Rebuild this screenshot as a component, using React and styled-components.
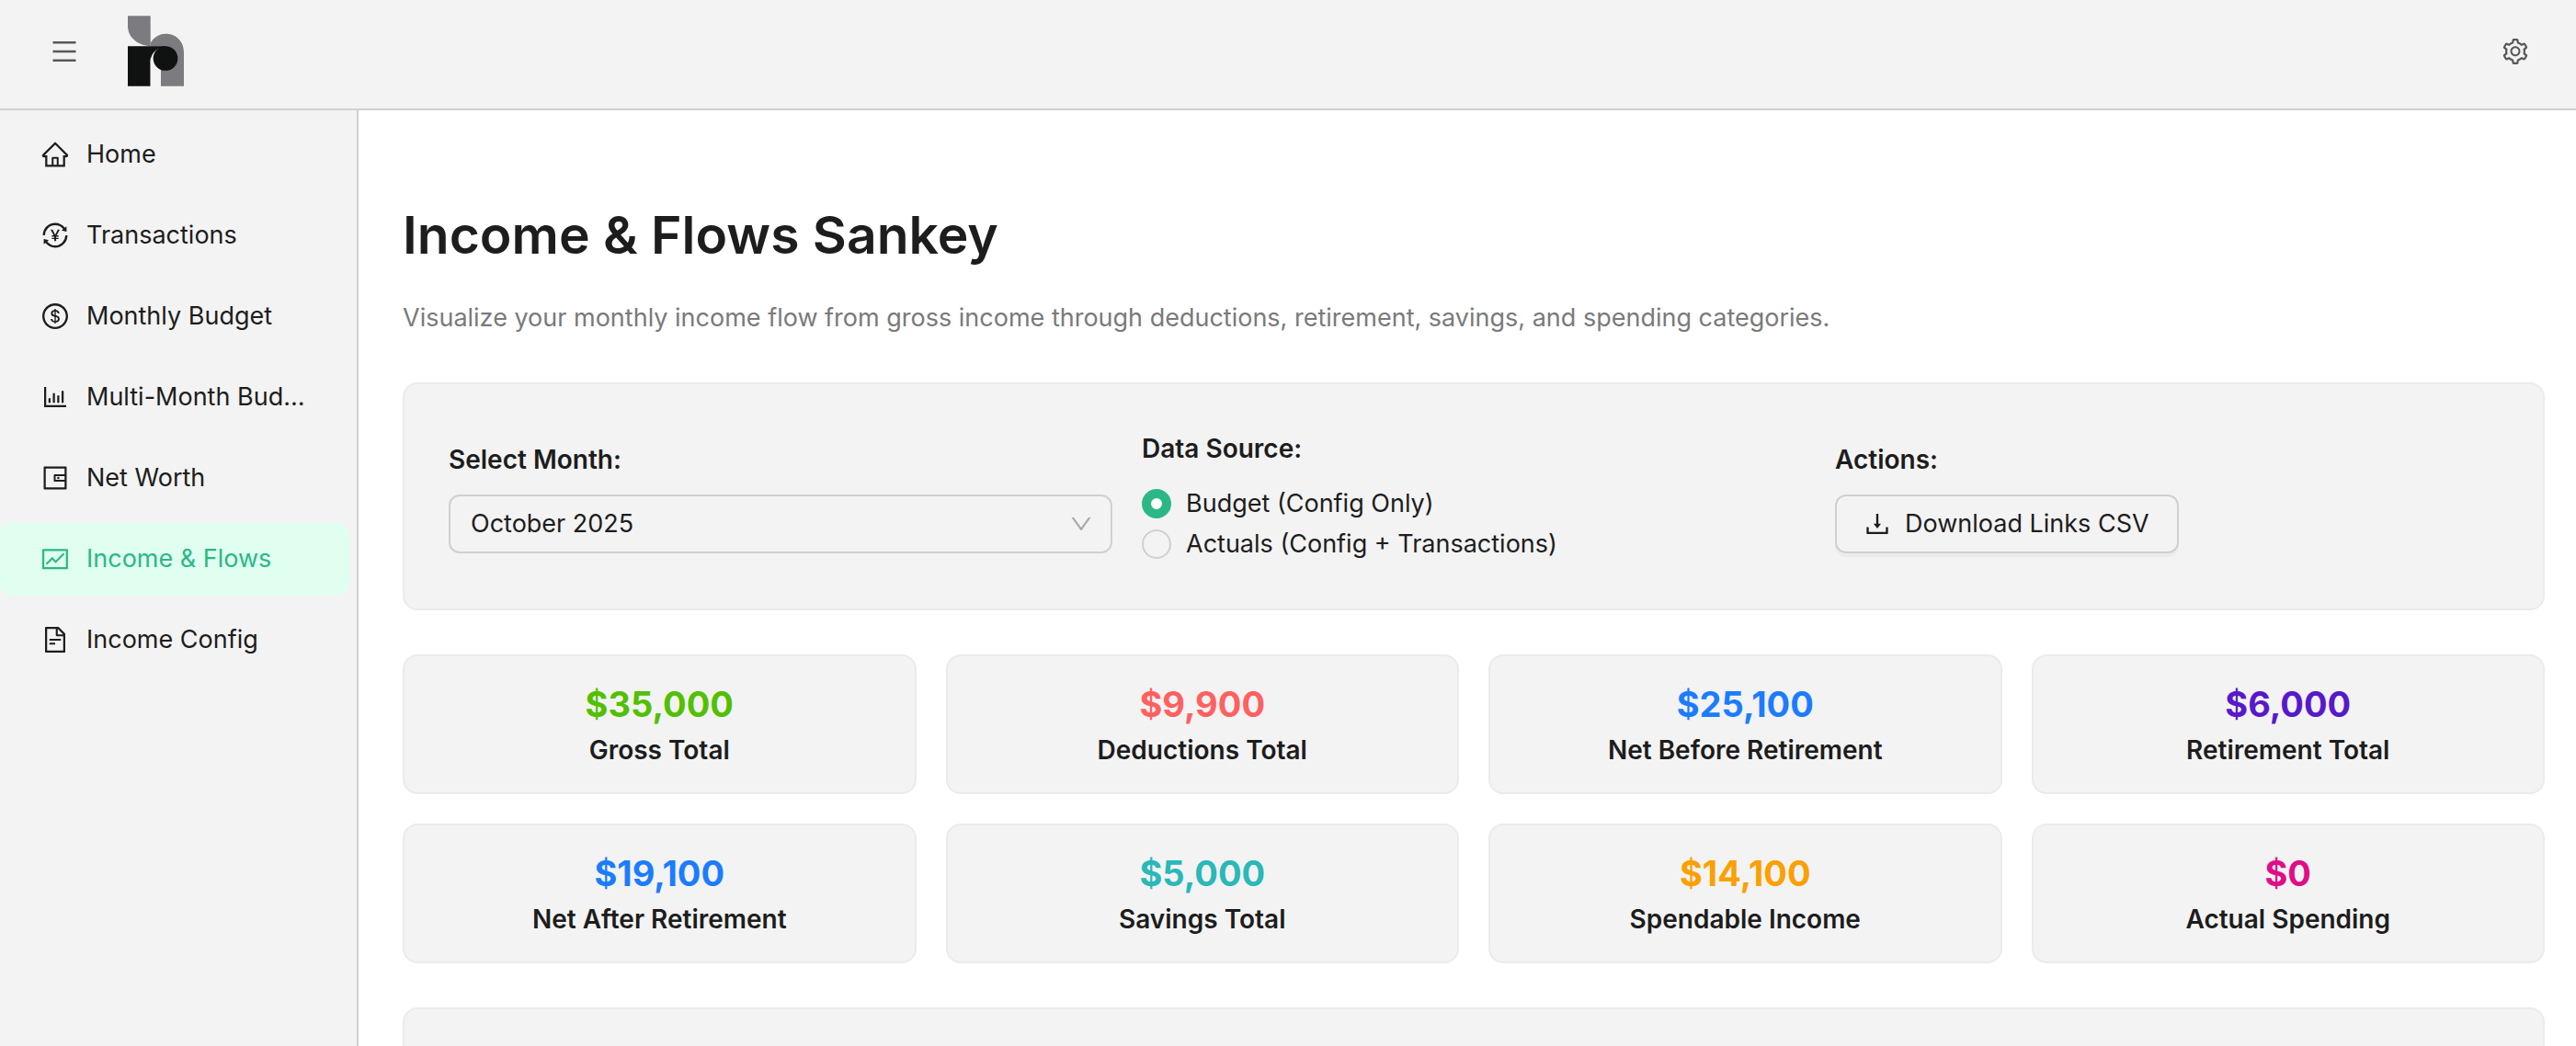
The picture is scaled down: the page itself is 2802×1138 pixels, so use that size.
import React, { useState } from "react";
import styled, { createGlobalStyle } from "styled-components";
import {
  AiOutlineBarChart,
  AiOutlineDollar,
  AiOutlineDown,
  AiOutlineDownload,
  AiOutlineFileText,
  AiOutlineFund,
  AiOutlineHome,
  AiOutlineMenu,
  AiOutlineSetting,
  AiOutlineTransaction,
  AiOutlineWallet,
} from "react-icons/ai";

const navItems = [
  { label: "Home", icon: AiOutlineHome },
  { label: "Transactions", icon: AiOutlineTransaction },
  { label: "Monthly Budget", icon: AiOutlineDollar },
  { label: "Multi-Month Budget", icon: AiOutlineBarChart },
  { label: "Net Worth", icon: AiOutlineWallet },
  { label: "Income & Flows", icon: AiOutlineFund, active: true },
  { label: "Income Config", icon: AiOutlineFileText },
];

const stats = [
  { label: "Gross Total", value: "$35,000", color: "#52c000" },
  { label: "Deductions Total", value: "$9,900", color: "#ff6060" },
  { label: "Net Before Retirement", value: "$25,100", color: "#1c7cff" },
  { label: "Retirement Total", value: "$6,000", color: "#5818cc" },
  { label: "Net After Retirement", value: "$19,100", color: "#1c7cff" },
  { label: "Savings Total", value: "$5,000", color: "#2ab8b8" },
  { label: "Spendable Income", value: "$14,100", color: "#faa000" },
  { label: "Actual Spending", value: "$0", color: "#e00c88" },
];

function Logo() {
  return (
    <svg width="61" height="77" viewBox="0 0 183 230" role="img" aria-label="Logo">
      <path d="M0 0H74V99C32 97 0 70 0 34Z" fill="#7b7b80" />
      <path d="M74 89C86 69 104 59 124 59C158 59 183 85 183 119V230H108V100H74Z" fill="#7b7b80" />
      <path d="M0 99H124V139H74V230H0Z" fill="#101211" />
      <path d="M100 107C84 117 74 131 74 150V230H108V139Z" fill="#f3f3f3" />
      <circle cx="123" cy="139" r="40" fill="#101211" />
    </svg>
  );
}

function App() {
  const [month, setMonth] = useState("October 2025");
  const [source, setSource] = useState("budget");

  return (
    <StyledPage>
      <GlobalStyle />
      <StyledHeader>
        <StyledIconButton aria-label="Toggle menu">
          <AiOutlineMenu />
        </StyledIconButton>
        <Logo />
        <StyledSpacer />
        <StyledIconButton aria-label="Settings">
          <AiOutlineSetting />
        </StyledIconButton>
      </StyledHeader>
      <StyledBody>
        <StyledSidebar>
          {navItems.map(({ label, icon: Icon, active }) => (
            <StyledNavLink href="#" key={label} $active={active}>
              <Icon />
              <span>{label}</span>
            </StyledNavLink>
          ))}
        </StyledSidebar>
        <StyledMain>
          <StyledTitle>Income &amp; Flows Sankey</StyledTitle>
          <StyledSubtitle>
            Visualize your monthly income flow from gross income through
            deductions, retirement, savings, and spending categories.
          </StyledSubtitle>
          <StyledFilters>
            <StyledField>
              <StyledLabel as="label" htmlFor="month">
                Select Month:
              </StyledLabel>
              <StyledSelectBox>
                <select
                  id="month"
                  value={month}
                  onChange={(e) => setMonth(e.target.value)}
                >
                  <option>October 2025</option>
                  <option>September 2025</option>
                </select>
                <AiOutlineDown />
              </StyledSelectBox>
            </StyledField>
            <StyledField role="radiogroup" aria-labelledby="source-label">
              <StyledLabel id="source-label">Data Source:</StyledLabel>
              <div>
                <StyledRadio>
                  <input
                    type="radio"
                    name="source"
                    checked={source === "budget"}
                    onChange={() => setSource("budget")}
                  />
                  Budget (Config Only)
                </StyledRadio>
                <StyledRadio>
                  <input
                    type="radio"
                    name="source"
                    checked={source === "actuals"}
                    onChange={() => setSource("actuals")}
                  />
                  Actuals (Config + Transactions)
                </StyledRadio>
              </div>
            </StyledField>
            <StyledField>
              <StyledLabel>Actions:</StyledLabel>
              <StyledButton>
                <AiOutlineDownload />
                Download Links CSV
              </StyledButton>
            </StyledField>
          </StyledFilters>
          <StyledStats>
            {stats.map((stat) => (
              <StyledStat key={stat.label}>
                <StyledValue $color={stat.color}>{stat.value}</StyledValue>
                <StyledLabel>{stat.label}</StyledLabel>
              </StyledStat>
            ))}
          </StyledStats>
          <StyledChart />
        </StyledMain>
      </StyledBody>
    </StyledPage>
  );
}

const GlobalStyle = createGlobalStyle`
  * {
    box-sizing: border-box;
  }
  body {
    margin: 0;
    background: #fff;
    color: #1d1d1d;
    font-family: Inter, "Liberation Sans", sans-serif;
    font-size: 27px;
    line-height: 44px;
  }
  button, select {
    font: inherit;
    color: inherit;
  }
`;
const StyledPage = styled.div`
  height: 100vh;
  display: flex;
  flex-direction: column;
  overflow: hidden;
`;
const StyledHeader = styled.header`
  flex: none;
  display: flex;
  align-items: center;
  padding: 17px 50px 24px 54px;
  background: #f3f3f3;
  border-bottom: 2px solid #d0d0d0;
`;
const StyledSpacer = styled.div`
  flex: 1;
`;
const StyledIconButton = styled.button`
  display: flex;
  padding: 0;
  border: none;
  background: none;
  color: #585858;
  svg {
    width: 32px;
    height: 32px;
  }
  & + svg {
    margin-left: 53px;
  }
`;
const StyledBody = styled.div`
  flex: 1;
  min-height: 0;
  display: flex;
`;
const StyledSidebar = styled.nav`
  flex: none;
  width: 390px;
  padding-top: 8px;
  background: #f3f3f3;
  border-right: 2px solid #d0d0d0;
`;
const StyledNavLink = styled.a`
  display: flex;
  align-items: center;
  gap: 18px;
  height: 80px;
  margin: 0 8px 8px -2px;
  padding: 0 44px 0 46px;
  border-radius: 16px;
  text-decoration: none;
  color: ${({ $active }) => ($active ? "#2bb886" : "#1d1d1d")};
  background: ${({ $active }) => ($active ? "#e1fff0" : "transparent")};
  svg {
    flex: none;
    width: 32px;
    height: 32px;
  }
  span {
    overflow: hidden;
    white-space: nowrap;
    text-overflow: ellipsis;
  }
`;
const StyledMain = styled.main`
  flex: 1;
  min-width: 0;
  overflow: hidden;
  padding: 100px 34px 0 48px;
`;
const StyledTitle = styled.h1`
  margin: 0 0 32px;
  font-size: 57px;
  font-weight: 600;
  line-height: 72px;
`;
const StyledSubtitle = styled.p`
  margin: 0 0 48px;
  color: #7a7a7a;
`;
const StyledCard = styled.section`
  background: #f3f3f3;
  border: 2px solid #ebebeb;
  border-radius: 16px;
`;
const StyledFilters = styled(StyledCard)`
  display: grid;
  grid-template-columns: repeat(3, 1fr);
  align-items: center;
  gap: 32px;
  padding: 48px;
`;
const StyledField = styled.div`
  display: flex;
  flex-direction: column;
  align-items: flex-start;
  gap: 16px;
`;
const StyledLabel = styled.div`
  font-size: 28px;
  font-weight: 600;
`;
const StyledSelectBox = styled.div`
  display: grid;
  align-items: center;
  width: 100%;
  select,
  svg {
    grid-area: 1 / 1;
  }
  select {
    appearance: none;
    width: 100%;
    height: 64px;
    padding: 0 22px;
    border: 2px solid #d0d0d0;
    border-radius: 12px;
    background: transparent;
  }
  svg {
    justify-self: end;
    width: 28px;
    height: 28px;
    margin-right: 20px;
    color: #a8a8a8;
    pointer-events: none;
  }
`;
const StyledRadio = styled.label`
  display: flex;
  align-items: center;
  gap: 16px;
  input {
    appearance: none;
    width: 32px;
    height: 32px;
    margin: 0;
    border: 2px solid #d0d0d0;
    border-radius: 50%;
  }
  input:checked {
    border: 10px solid #2bb886;
    background: #fff;
  }
`;
const StyledButton = styled.button`
  display: flex;
  align-items: center;
  gap: 14px;
  height: 64px;
  padding: 0 30px 0 28px;
  border: 2px solid #d0d0d0;
  border-radius: 12px;
  background: #f3f3f3;
  box-shadow: 0 4px 0 #ebebeb;
  svg {
    width: 32px;
    height: 32px;
  }
`;
const StyledStats = styled.div`
  display: grid;
  grid-template-columns: repeat(4, 1fr);
  gap: 32px;
  margin: 48px 0;
`;
const StyledStat = styled(StyledCard)`
  padding: 24px;
  text-align: center;
`;
const StyledValue = styled.div`
  font-size: 38px;
  font-weight: 700;
  line-height: 56px;
  color: ${({ $color }) => $color};
`;
const StyledChart = styled(StyledCard)`
  height: 1200px;
`;

export default App;
